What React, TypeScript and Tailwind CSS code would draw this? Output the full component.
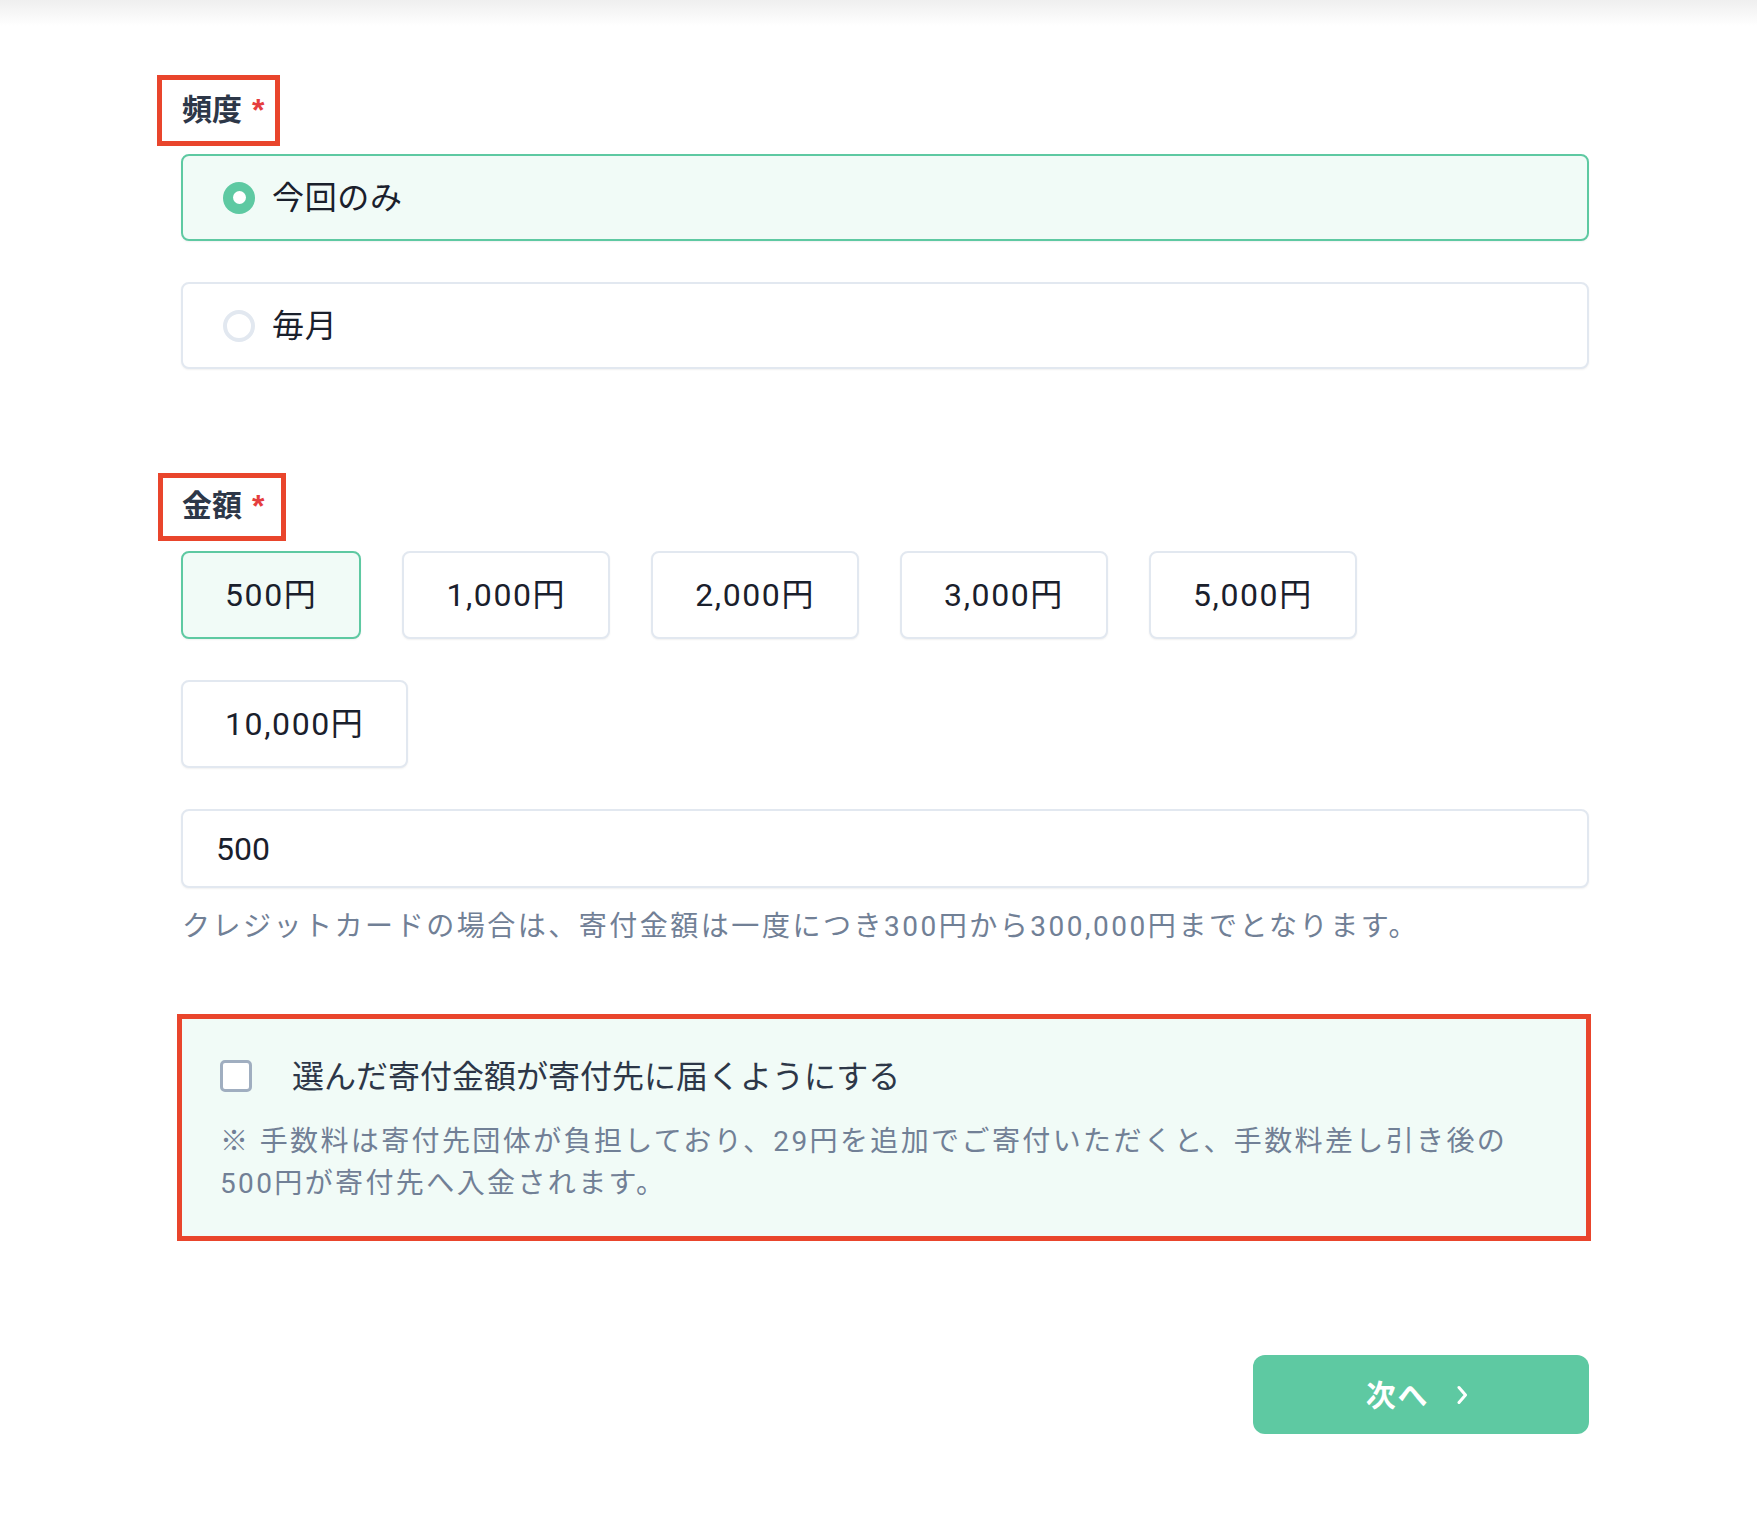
import { useState } from "react";

const font = { fontFamily: 'Roboto, "Noto Sans CJK JP", "Noto Sans", sans-serif' };

const AMOUNTS = [500, 1000, 2000, 3000, 5000, 10000];

function Label({ text, boxClass, heightClass }: { text: string; boxClass: string; heightClass: string }) {
  return (
    <div className={`relative flex items-center pl-px ${heightClass}`}>
      {/* red annotation frame */}
      <span className={`pointer-events-none absolute top-0 h-full border-[5px] border-[#e9452c] ${boxClass}`} />
      <span className="relative -top-[1px] text-[30px] font-bold leading-none text-[#2d3748]">{text}</span>
      <span
        className="relative -top-[1px] ml-[10px] text-[32px] font-bold leading-none text-[#e53e3e]"
        style={{ fontFamily: '"Liberation Sans", Arial, sans-serif' }}
      >
        *
      </span>
    </div>
  );
}

function RadioCard({ label, checked, onClick }: { label: string; checked: boolean; onClick: () => void }) {
  return (
    <button
      onClick={onClick}
      className={`flex h-[87px] w-full items-center rounded-[8px] border-2 pl-[40px] text-left shadow-[0_1px_2px_rgba(0,0,0,0.06)] ${
        checked ? "border-[#5ec9a2] bg-[#f1fbf7]" : "border-[#e2e8f0] bg-white"
      }`}
    >
      {checked ? (
        <span className="flex h-[32px] w-[32px] items-center justify-center rounded-full bg-[#5ec9a2]">
          <span className="h-[13px] w-[13px] rounded-full bg-white" />
        </span>
      ) : (
        <span className="h-[32px] w-[32px] rounded-full border-[4px] border-[#e2e8f0] bg-white" />
      )}
      <span className="ml-[17px] text-[32px] leading-none tracking-[0.02em] text-[#1a202c]">{label}</span>
    </button>
  );
}

export default function App() {
  const [freq, setFreq] = useState<"once" | "monthly">("once");
  const [amount, setAmount] = useState(500);
  const [cover, setCover] = useState(false);

  return (
    <div className="min-h-[1533px] bg-white" style={font}>
      <div className="h-[26px] bg-linear-to-b from-[#efefef] to-white" />

      <div className="ml-[181px] w-[1408px] pb-[99px]">
        {/* 頻度 */}
        <div className="mt-[49px]">
          <Label text="頻度" heightClass="h-[71px]" boxClass="-left-[24px] w-[123px]" />
        </div>
        <div className="mt-[8px] flex flex-col gap-[41px]">
          <RadioCard label="今回のみ" checked={freq === "once"} onClick={() => setFreq("once")} />
          <RadioCard label="毎月" checked={freq === "monthly"} onClick={() => setFreq("monthly")} />
        </div>

        {/* 金額 */}
        <div className="mt-[104px]">
          <Label text="金額" heightClass="h-[68px]" boxClass="-left-[23px] w-[128px]" />
        </div>
        <div className="mt-[10px] flex flex-wrap gap-[41px]">
          {AMOUNTS.map((a) => (
            <button
              key={a}
              onClick={() => setAmount(a)}
              className={`h-[88px] rounded-[8px] border-2 px-[42px] text-[32px] leading-none tracking-[0.05em] text-[#1a202c] shadow-[0_1px_2px_rgba(0,0,0,0.06)] ${
                amount === a ? "border-[#5ec9a2] bg-[#f1fbf7]" : "border-[#e2e8f0] bg-white"
              }`}
            >
              {a.toLocaleString("en-US")}円
            </button>
          ))}
        </div>

        <input
          value={amount}
          onChange={(e) => setAmount(Number(e.target.value.replace(/\D/g, "")) || 0)}
          className="mt-[41px] h-[79px] w-full rounded-[8px] border-2 border-[#e2e8f0] bg-white pl-[33px] text-[32px] text-[#1a202c] shadow-[0_1px_2px_rgba(0,0,0,0.06)] outline-none"
        />
        <p className="mt-[19px] h-[40px] pl-px text-[28px] leading-[40px] tracking-[0.09em] text-[#718096]">
          クレジットカードの場合は、寄付金額は一度につき300円から300,000円までとなります。
        </p>

        {/* fee cover */}
        <div className="relative mt-[70px] bg-[#f1fbf7] px-[39px] pb-[34px] pt-[39px]">
          <span className="pointer-events-none absolute -bottom-[3px] -left-[4px] -right-[2px] -top-[3px] border-[5px] border-[#e9452c]" />
          <label className="flex h-[40px] cursor-pointer items-center">
            <input type="checkbox" checked={cover} onChange={(e) => setCover(e.target.checked)} className="peer sr-only" />
            <span className="h-[32px] w-[32px] rounded-[5px] border-[3px] border-[#a0aec0] bg-white peer-checked:border-[#5ec9a2] peer-checked:bg-[#5ec9a2]" />
            <span className="relative top-[1px] ml-[40px] text-[32px] leading-none text-[#2d3748]">選んだ寄付金額が寄付先に届くようにする</span>
          </label>
          <p className="mt-[25px] text-[28px] leading-[41.5px] tracking-[0.085em] text-[#718096]">
            ※ 手数料は寄付先団体が負担しており、29円を追加でご寄付いただくと、手数料差し引き後の
            <br />
            500円が寄付先へ入金されます。
          </p>
        </div>

        <div className="mt-[117px] flex justify-end">
          <button className="flex h-[79px] w-[336px] items-center justify-center gap-[28px] rounded-[12px] bg-[#5ec9a2] pr-[8px] text-[30px] font-bold leading-none text-white">
            <span className="relative top-[1px] tracking-[0.06em]">次へ</span>
            <svg width="11" height="20" viewBox="0 0 11 20" fill="none">
              <path d="M2 2.5L8.5 10L2 17.5" stroke="white" strokeWidth="3" strokeLinecap="round" strokeLinejoin="round" />
            </svg>
          </button>
        </div>
      </div>
    </div>
  );
}
